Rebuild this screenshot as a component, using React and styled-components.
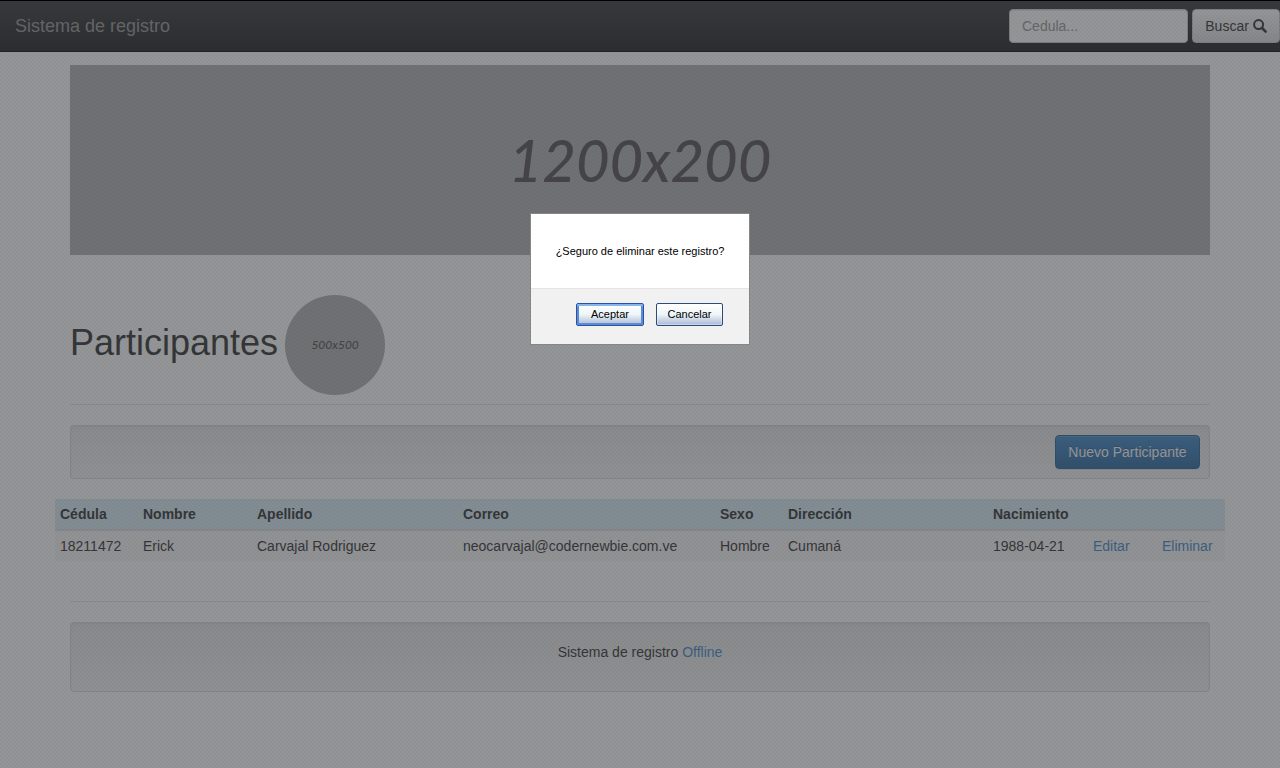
import React from "react";
import styled, { createGlobalStyle, css } from "styled-components";

const GlobalStyle = createGlobalStyle`
  *, *::before, *::after { box-sizing: border-box; }
  body {
    margin: 0;
    background: #fff;
    color: #333;
    font: 14px/20px "Liberation Sans", Arial, sans-serif;
  }
`;

const Navbar = styled.nav`
  display: flex;
  align-items: center;
  justify-content: space-between;
  height: 52px;
  padding-left: 15px;
  border: solid #080808;
  border-width: 1px 0;
  background: linear-gradient(#3c3c3c, #222);
`;

const Brand = styled.a`
  color: #999;
  font-size: 18px;
  text-decoration: none;
`;

const SearchForm = styled.form`
  display: flex;
  gap: 4px;
`;

const SearchInput = styled.input`
  width: 179px;
  height: 34px;
  padding: 6px 12px;
  border: 1px solid #ccc;
  border-radius: 4px;
  background: #fff;
  box-shadow: inset 0 1px 1px rgba(0, 0, 0, 0.075);
  font: inherit;

  &::placeholder {
    color: #999;
    opacity: 1;
  }
`;

const Button = styled.button`
  min-width: 88px;
  height: 34px;
  padding: 6px 12px;
  border: 1px solid #ccc;
  border-radius: 4px;
  background: linear-gradient(#fff, #e0e0e0);
  box-shadow: inset 0 1px 0 rgba(255, 255, 255, 0.15), 0 1px 1px rgba(0, 0, 0, 0.075);
  color: #333;
  font: inherit;
  white-space: nowrap;

  ${(p) =>
    p.$primary &&
    css`
      min-width: 145px;
      border-color: #2b669a;
      background: linear-gradient(#428bca, #2d6ca2);
      color: #fff;
      text-shadow: 0 -1px 0 rgba(0, 0, 0, 0.2);
    `}
`;

const SearchIcon = styled.svg`
  width: 14px;
  height: 14px;
  vertical-align: -2px;
`;

const Container = styled.main`
  max-width: 1170px;
  margin: 0 auto;
  padding: 13px 15px 0;
`;

const Banner = styled.div`
  display: flex;
  align-items: center;
  justify-content: center;
  aspect-ratio: 6 / 1;
  background: #b2b2b2;
  color: #585254;
  font: italic 500 58px/60px Lato, sans-serif;
`;

const PageHeader = styled.header`
  display: flex;
  align-items: center;
  gap: 7px;
  margin: 40px 0 20px;
  padding-bottom: 9px;
  border-bottom: 1px solid #e8e8e8;
`;

const Title = styled.h1`
  margin: 0;
  padding-bottom: 4px;
  font-size: 36px;
  font-weight: 400;
  line-height: 40px;
`;

const Avatar = styled.div`
  display: flex;
  align-items: center;
  justify-content: center;
  width: 100px;
  height: 100px;
  border-radius: 50%;
  background: #b2b2b2;
  color: #585254;
  font: italic 500 12px/20px Lato, sans-serif;
`;

const Well = styled.section`
  display: flex;
  justify-content: ${(p) => (p.$footer ? "center" : "flex-end")};
  padding: ${(p) => (p.$footer ? "19px 19px 29px" : "9px")};
  border: 1px solid #dcdcdc;
  border-radius: ${(p) => (p.$footer ? "4px" : "3px")};
  background: linear-gradient(#e8e8e8, #f5f5f5);
  box-shadow: inset 0 1px 3px rgba(0, 0, 0, 0.05);
`;

const TableRow = styled.div`
  margin: 20px -15px;
`;

const Table = styled.table`
  width: 100%;
  table-layout: fixed;
  border-collapse: separate;
  border-spacing: 0;
`;

const HeadCell = styled.th`
  height: 32px;
  padding: 5px;
  border-bottom: 2px solid #ddd;
  background: #d9edf7;
  text-align: left;
`;

const Cell = styled.td`
  height: 30px;
  padding: 5px;
  background: #f9f9f9;
`;

const Link = styled.a`
  color: #428bca;
  text-decoration: none;
`;

const Rule = styled.hr`
  margin: 40px 0 20px;
  border: 0;
  border-top: 1px solid #e8e8e8;
`;

const FooterText = styled.p`
  margin: 0;
`;

const Overlay = styled.div`
  position: fixed;
  inset: 0;
  display: flex;
  align-items: flex-start;
  justify-content: center;
  padding-top: 212px;
  border-top: 1px solid #000;
  background:
    repeating-conic-gradient(rgba(40, 44, 58, 0.04) 0 25%, transparent 0 50%) 0 0 / 4px 4px,
    rgba(52, 55, 58, 0.53);
`;

const Dialog = styled.section`
  width: 220px;
  border: 1px solid #85858a;
  background: #fff;
  color: #000;
  font-size: 11px;
`;

const Message = styled.p`
  margin: 0;
  padding: 27px 0;
  text-align: center;
  white-space: nowrap;
`;

const Actions = styled.div`
  display: flex;
  justify-content: flex-end;
  gap: 12px;
  padding: 14px 26px 18px;
  border-top: 1px solid #e4e4e4;
  background: #f1f1f1;
`;

const DialogButton = styled.button`
  width: ${(p) => (p.$active ? 68 : 67)}px;
  height: 23px;
  padding: 0 0 2px;
  border: 1px solid ${(p) => (p.$active ? "#2953a6" : "#2c4a7c")};
  border-radius: 2px;
  background: linear-gradient(#fff, #eef5f8 50%, #a9b8d4);
  box-shadow: ${(p) =>
    p.$active
      ? "inset 0 2px 0 #86b5ea, inset 0 0 0 2px #5d8bd3"
      : "inset 0 0 0 1px rgba(255, 255, 255, 0.4)"};
  color: #000;
  font: 11px/18px "Liberation Sans", Arial, sans-serif;
`;

const columns = [
  ["Cédula", 83],
  ["Nombre", 114],
  ["Apellido", 206],
  ["Correo", 257],
  ["Sexo", 68],
  ["Dirección", 205],
  ["Nacimiento", 100],
  ["", 69],
  ["", 68],
];

const participants = [
  ["18211472", "Erick", "Carvajal Rodriguez", "neocarvajal@codernewbie.com.ve", "Hombre", "Cumaná", "1988-04-21"],
];

export default function App() {
  return (
    <>
      <GlobalStyle />
      <Navbar>
        <Brand href="#">Sistema de registro</Brand>
        <SearchForm>
          <SearchInput type="text" placeholder="Cedula..." aria-label="Cedula" />
          <Button type="button">
            Buscar{" "}
            <SearchIcon viewBox="0 0 14 14" fill="none" stroke="currentColor" aria-hidden="true">
              <circle cx="5.6" cy="5.6" r="4.5" strokeWidth="2" />
              <path d="M9 9l3.6 3.6" strokeWidth="2.6" strokeLinecap="round" />
            </SearchIcon>
          </Button>
        </SearchForm>
      </Navbar>
      <Container>
        <Banner>1200x200</Banner>
        <PageHeader>
          <Title>Participantes</Title>
          <Avatar>500x500</Avatar>
        </PageHeader>
        <Well>
          <Button type="button" $primary>Nuevo Participante</Button>
        </Well>
        <TableRow>
          <Table>
            <colgroup>
              {columns.map(([, width], i) => (
                <col key={i} width={width} />
              ))}
            </colgroup>
            <thead>
              <tr>
                {columns.map(([label], i) => (
                  <HeadCell key={i} scope="col">{label}</HeadCell>
                ))}
              </tr>
            </thead>
            <tbody>
              {participants.map((person) => (
                <tr key={person[0]}>
                  {person.map((value) => (
                    <Cell key={value}>{value}</Cell>
                  ))}
                  <Cell><Link href="#">Editar</Link></Cell>
                  <Cell><Link href="#">Eliminar</Link></Cell>
                </tr>
              ))}
            </tbody>
          </Table>
        </TableRow>
        <Rule />
        <Well as="footer" $footer>
          <FooterText>
            Sistema de registro <Link href="#">Offline</Link>
          </FooterText>
        </Well>
      </Container>
      <Overlay>
        <Dialog role="dialog" aria-modal="true" aria-labelledby="confirm-message">
          <Message id="confirm-message">¿Seguro de eliminar este registro?</Message>
          <Actions>
            <DialogButton type="button" $active>Aceptar</DialogButton>
            <DialogButton type="button">Cancelar</DialogButton>
          </Actions>
        </Dialog>
      </Overlay>
    </>
  );
}
